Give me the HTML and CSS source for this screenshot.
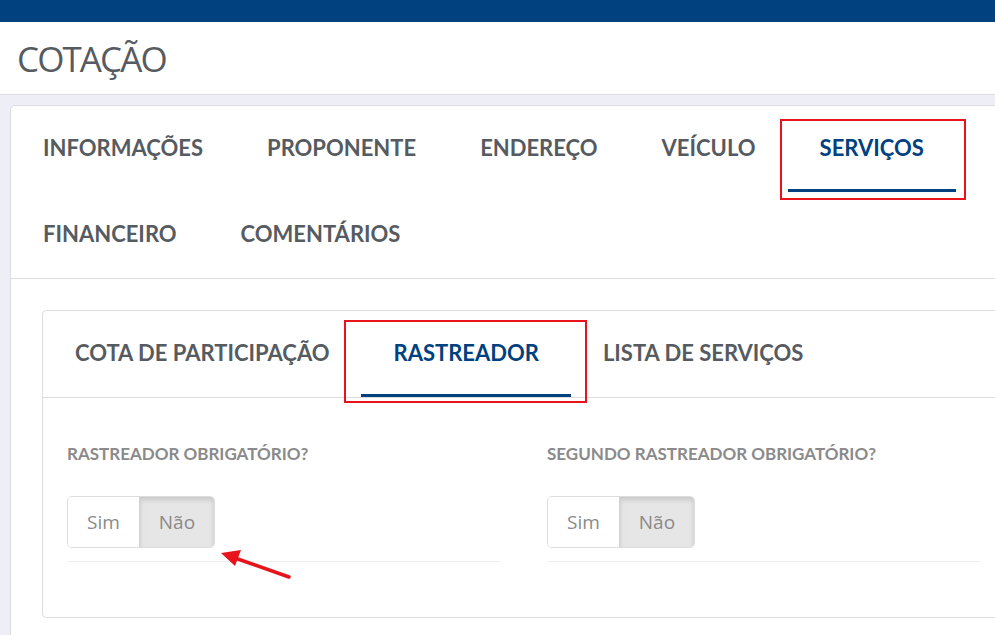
FILE: index.html
```html
<!DOCTYPE html>
<html lang="pt-BR">
<head>
  <meta charset="UTF-8">
  <title>Cotação – Serviços</title>
  <link rel="stylesheet" href="styles.css">
</head>
<body>
  <div class="topbar"></div>

  <div class="page-title">
    <h1>COTAÇÃO</h1>
  </div>

  <main class="content">
    <section class="panel">
      <nav class="tabs">
        <a class="tab">INFORMAÇÕES</a>
        <a class="tab">PROPONENTE</a>
        <a class="tab">ENDEREÇO</a>
        <a class="tab">VEÍCULO</a>
        <a class="tab active">SERVIÇOS<span class="mark mark-main"></span></a>
        <a class="tab">FINANCEIRO</a>
        <a class="tab">COMENTÁRIOS</a>
      </nav>

      <div class="panel-body">
        <section class="subpanel">
          <nav class="tabs">
            <a class="tab">COTA DE PARTICIPAÇÃO</a>
            <a class="tab active">RASTREADOR<span class="mark mark-sub"></span></a>
            <a class="tab">LISTA DE SERVIÇOS</a>
          </nav>

          <div class="subpanel-body">
            <div class="field-grid">
              <div class="field">
                <label class="field-label">RASTREADOR OBRIGATÓRIO?</label>
                <div class="toggle">
                  <button class="toggle-btn">Sim</button>
                  <button class="toggle-btn on">Não</button>
                </div>
              </div>
              <div class="field">
                <label class="field-label">SEGUNDO RASTREADOR OBRIGATÓRIO?</label>
                <div class="toggle">
                  <button class="toggle-btn">Sim</button>
                  <button class="toggle-btn on">Não</button>
                </div>
              </div>
            </div>
          </div>
        </section>
      </div>
    </section>

    <!-- pointer to the first toggle -->
    <svg class="pointer" width="80" height="40" viewBox="0 0 80 40">
      <line x1="76" y1="32" x2="22" y2="13" stroke="#e8141c" stroke-width="3.5" stroke-linecap="round"/>
      <polygon points="8,8 28,5 22,21" fill="#e8141c"/>
    </svg>
  </main>
</body>
</html>
```

FILE: styles.css
```css
:root {
  --navy: #01417f;
  --text-dark: #565b61;
  --text-muted: #8a8a8a;
  --line: #dcdcdf;
  --page-bg: #eeeef6;
  --mark: #e8141c;
}

html, body {
  overflow: hidden;
}

body {
  margin: 0;
  width: 995px;
  height: 635px;
  background-color: var(--page-bg);
  font-family: "Open Sans", Arial, sans-serif;
  color: var(--text-dark);
}

.topbar {
  height: 22px;
  background-color: var(--navy);
}

.page-title {
  height: 72px;
  background-color: #fff;
  border-bottom: 1px solid var(--line);
  display: flex;
  align-items: center;
  padding-left: 17px;
}

.page-title h1 {
  margin: 0;
  font-family: "Open Sans", Arial, sans-serif;
  font-weight: 400;
  font-size: 35px;
  letter-spacing: -1.9px;
  color: var(--text-dark);
}

.content {
  position: relative;
  padding: 10px 0 0 10px;
}

.panel {
  width: 1040px;
  background-color: #fff;
  border: 1px solid var(--line);
  border-radius: 5px;
}

.tabs {
  display: flex;
  flex-wrap: wrap;
  border-bottom: 1px solid var(--line);
}

.tab {
  position: relative;
  height: 86px;
  box-sizing: border-box;
  padding: 0 32px;
  display: flex;
  align-items: center;
  border-bottom: 3px solid transparent;
  font-family: Lato, "Open Sans", sans-serif;
  font-weight: 700;
  font-size: 22px;
  color: var(--text-dark);
  cursor: pointer;
}

.tab.active {
  color: var(--navy);
  border-bottom-color: var(--navy);
}

/* red highlight frames */
.mark {
  position: absolute;
  border: 2px solid var(--mark);
  pointer-events: none;
}

.mark-main {
  top: 13px;
  left: -8px;
  right: -10px;
  bottom: -11px;
}

.mark-sub {
  top: 9px;
  left: -17px;
  right: -16px;
  bottom: -9px;
}

.panel-body {
  padding: 31px;
}

.subpanel {
  border: 1px solid var(--line);
  border-radius: 4px;
}

.subpanel-body {
  padding: 44px 24px 55px;
}

.field-grid {
  display: grid;
  grid-template-columns: 434px 434px;
  column-gap: 46px;
}

.field {
  padding-bottom: 13px;
  border-bottom: 1px solid #efefef;
}

.field-label {
  display: block;
  line-height: 24px;
  margin-bottom: 30px;
  font-family: Lato, "Open Sans", sans-serif;
  font-weight: 700;
  font-size: 17px;
  color: var(--text-muted);
}

.toggle {
  display: inline-flex;
  border: 1px solid #dcdcdc;
  border-radius: 5px;
  overflow: hidden;
}

.toggle-btn {
  height: 50px;
  padding: 0 19px;
  border: none;
  background-color: #fff;
  font-family: "Open Sans", Arial, sans-serif;
  font-size: 19px;
  color: #8a8a8a;
  cursor: pointer;
}

.toggle-btn.on {
  background-color: #e6e6e6;
  border-left: 1px solid #d2d2d2;
  box-shadow: inset 0 3px 5px rgba(0, 0, 0, 0.13);
}

.pointer {
  position: absolute;
  left: 213px;
  top: 450px;
}
```
